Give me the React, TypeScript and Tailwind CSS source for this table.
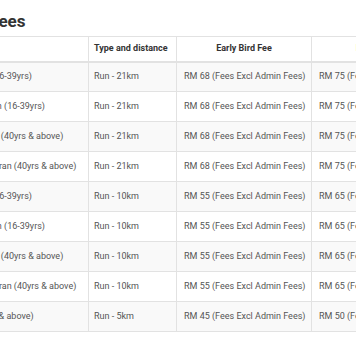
import React from 'react';

interface FeeRow {
    category: string;
    distance: string;
    earlyBird: string;
    normal: string;
}

const rows: FeeRow[] = [
    { category: 'Men Open (16-39yrs)', distance: 'Run - 21km', earlyBird: 'RM 68', normal: 'RM 75' },
    { category: 'Women Open (16-39yrs)', distance: 'Run - 21km', earlyBird: 'RM 68', normal: 'RM 75' },
    { category: 'Men Veteran (40yrs & above)', distance: 'Run - 21km', earlyBird: 'RM 68', normal: 'RM 75' },
    { category: 'Women Veteran (40yrs & above)', distance: 'Run - 21km', earlyBird: 'RM 68', normal: 'RM 75' },
    { category: 'Men Open (16-39yrs)', distance: 'Run - 10km', earlyBird: 'RM 55', normal: 'RM 65' },
    { category: 'Women Open (16-39yrs)', distance: 'Run - 10km', earlyBird: 'RM 55', normal: 'RM 65' },
    { category: 'Men Veteran (40yrs & above)', distance: 'Run - 10km', earlyBird: 'RM 55', normal: 'RM 65' },
    { category: 'Women Veteran (40yrs & above)', distance: 'Run - 10km', earlyBird: 'RM 55', normal: 'RM 65' },
    { category: 'Open (16yrs & above)', distance: 'Run - 5km', earlyBird: 'RM 45', normal: 'RM 50' },
];

const App: React.FC = () => {
    return (
        <div className="w-[356px] h-[364px] overflow-hidden bg-white font-['Roboto',sans-serif]">
            {/* page is scrolled sideways, so the table starts left of the viewport */}
            <div className="ml-[-61px] w-[507px] pt-[11px]">
                <h2 className="pl-[8px] text-[17px] leading-[20px] font-bold text-[#333]">Race Fees</h2>

                <table className="mt-[5px] w-[507px] table-fixed border-collapse text-[9px]">
                    <colgroup>
                        <col className="w-[149px]" />
                        <col className="w-[88px]" />
                        <col className="w-[135px]" />
                        <col className="w-[135px]" />
                    </colgroup>
                    <thead>
                        <tr className="h-[25px]">
                            <th className="border border-[#e2e2e2] border-b-2 px-2 text-left font-bold text-[#333]">Category</th>
                            <th className="border border-[#e2e2e2] border-b-2 px-[5px] text-left font-bold text-[#333]">Type and distance</th>
                            <th className="border border-[#e2e2e2] border-b-2 px-[7px] text-center font-bold text-[#333]">Early Bird Fee</th>
                            <th className="border border-[#e2e2e2] border-b-2 px-[7px] text-center font-bold text-[#333]">Normal Fee</th>
                        </tr>
                    </thead>
                    <tbody>
                        {rows.map((row, index) => (
                            <tr key={index} className={`h-[30px] ${index % 2 === 0 ? 'bg-[#f9f9f9]' : 'bg-white'}`}>
                                <td className="border border-[#e2e2e2] px-2 text-[#555] whitespace-nowrap">{row.category}</td>
                                <td className="border border-[#e2e2e2] px-[5px] text-[#555] whitespace-nowrap">{row.distance}</td>
                                <td className="border border-[#e2e2e2] px-[7px] text-[#555] whitespace-nowrap">{row.earlyBird} (Fees Excl Admin Fees)</td>
                                <td className="border border-[#e2e2e2] px-[7px] text-[#555] whitespace-nowrap">{row.normal} (Fees Excl Admin Fees)</td>
                            </tr>
                        ))}
                    </tbody>
                </table>
            </div>
        </div>
    );
};

export default App;
